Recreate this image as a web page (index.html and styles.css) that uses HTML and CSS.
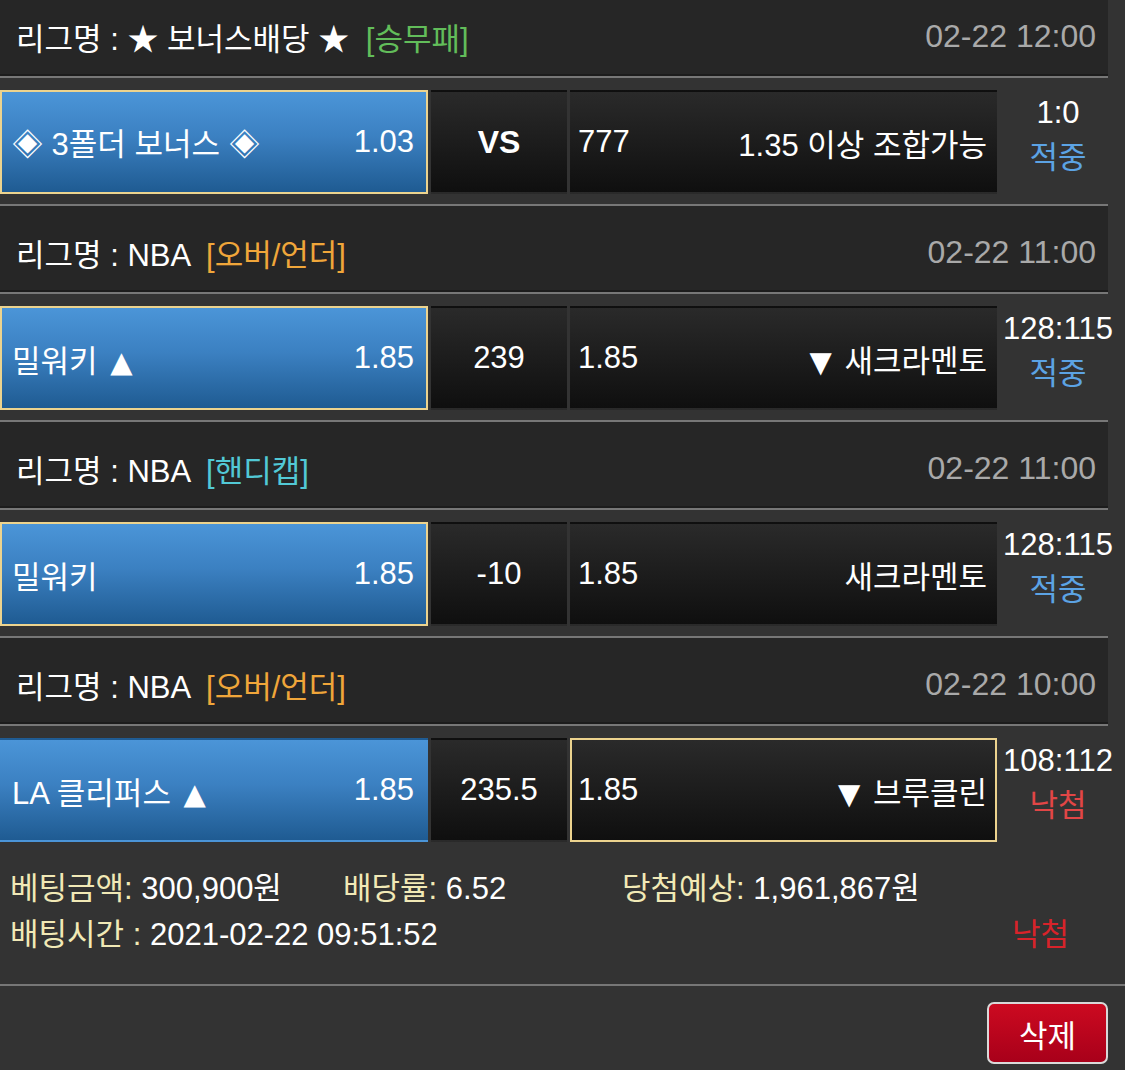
FILE: index.html
```html
<!doctype html>
<html lang="ko">
<head>
  <meta charset="utf-8" />
  <meta name="viewport" content="width=device-width, initial-scale=1" />
  <title>배팅내역</title>
  <link rel="stylesheet" href="styles.css">
</head>

<body>
  <main class="slip">
    <section class="game">
      <div class="league">
        <p class="leagueName">리그명 : ★ 보너스배당 ★ <span class="tag tagWin">[승무패]</span></p>
        <p class="date">02-22 12:00</p>
      </div>
      <div class="betRow">
        <div class="pick home picked"><span>◈ 3폴더 보너스 ◈</span><span>1.03</span></div>
        <div class="pick mid"><b>VS</b></div>
        <div class="pick away"><span>777</span><span>1.35 이상 조합가능</span></div>
        <div class="result"><span class="score">1:0</span><span class="hit">적중</span></div>
      </div>
    </section>

    <section class="game">
      <div class="league">
        <p class="leagueName">리그명 : NBA <span class="tag tagOU">[오버/언더]</span></p>
        <p class="date">02-22 11:00</p>
      </div>
      <div class="betRow">
        <div class="pick home picked"><span>밀워키 <span class="arr">▲</span></span><span>1.85</span></div>
        <div class="pick mid">239</div>
        <div class="pick away"><span>1.85</span><span><span class="arr">▼</span> 새크라멘토</span></div>
        <div class="result"><span class="score">128:115</span><span class="hit">적중</span></div>
      </div>
    </section>

    <section class="game">
      <div class="league">
        <p class="leagueName">리그명 : NBA <span class="tag tagHandi">[핸디캡]</span></p>
        <p class="date">02-22 11:00</p>
      </div>
      <div class="betRow">
        <div class="pick home picked"><span>밀워키</span><span>1.85</span></div>
        <div class="pick mid">-10</div>
        <div class="pick away"><span>1.85</span><span>새크라멘토</span></div>
        <div class="result"><span class="score">128:115</span><span class="hit">적중</span></div>
      </div>
    </section>

    <section class="game">
      <div class="league">
        <p class="leagueName">리그명 : NBA <span class="tag tagOU">[오버/언더]</span></p>
        <p class="date">02-22 10:00</p>
      </div>
      <div class="betRow last">
        <div class="pick home"><span>LA 클리퍼스 <span class="arr">▲</span></span><span>1.85</span></div>
        <div class="pick mid">235.5</div>
        <div class="pick away picked"><span>1.85</span><span><span class="arr">▼</span> 브루클린</span></div>
        <div class="result"><span class="score">108:112</span><span class="miss">낙첨</span></div>
      </div>
    </section>

    <section class="summary">
      <div class="sumLine">
        <p class="sumItem amount"><span class="k">베팅금액:</span> 300,900원</p>
        <p class="sumItem rate"><span class="k">배당률:</span> 6.52</p>
        <p class="sumItem expect"><span class="k">당첨예상:</span> 1,961,867원</p>
      </div>
      <div class="sumLine">
        <p class="sumItem"><span class="k">배팅시간 :</span> 2021-02-22 09:51:52</p>
        <p class="sumState">낙첨</p>
      </div>
    </section>

    <div class="actions">
      <button class="delBtn" type="button">삭제</button>
    </div>
  </main>
</body>
</html>
```

FILE: styles.css
```css
:root{
  --bg:#333333;
  --head:#262626;
  --line:#777777;
  --text:#ffffff;
  --muted:#a9a9a9;
  --gold:#ecd38e;
  --cream:#f1e9b6;
}

*{ box-sizing:border-box; }
body{
  margin:0;
  background:var(--bg);
  color:var(--text);
  font-family:"Liberation Sans", Arial, "Noto Sans CJK KR", sans-serif;
  overflow:hidden;
}
p{ margin:0; }

.slip{ margin-top:-10px; }

/* league header */
.league{
  width:1108px;
  height:88px;
  background:var(--head);
  display:flex;
  justify-content:space-between;
  align-items:center;
  padding:6px 12px 0 16px;
  border-bottom:2px solid var(--line);
  box-shadow:0 -2px 0 #1c1c1c inset;
}
.leagueName{ font-size:31px; }
.tag{ margin-left:8px; }
.tagWin{ color:#62bd5a; }
.tagOU{ color:#f0a63a; }
.tagHandi{ color:#52c9d6; }
.date{ font-size:32px; color:var(--muted); }

/* bet row */
.betRow{
  display:grid;
  grid-template-columns:428px 136px 427px 1fr;
  column-gap:3px;
  padding:12px 0 10px 0;
  border-bottom:2px solid var(--line);
  width:1108px;
}
.betRow .pick{ height:104px; }

.pick{
  display:flex;
  justify-content:space-between;
  align-items:center;
  font-size:31px;
  border:2px solid transparent;
  padding:0 12px 0 10px;
  background:linear-gradient(180deg, #2a2a2a, #0f0f0f);
}
.home{
  background:linear-gradient(180deg, #4b95d8 0%, #3b80c1 45%, #1f5b92 100%);
}
.mid{
  justify-content:center;
  padding:0;
}
.mid b{ font-size:32px; font-weight:700; }
.away{ padding:0 8px 0 6px; }
.picked{ border-color:var(--gold); }

.arr{
  font-family:"DejaVu Sans", sans-serif;
  font-size:29px;
  padding:0 4px;
}

.result{
  height:104px;
  display:flex;
  flex-direction:column;
  align-items:center;
  justify-content:center;
  padding-bottom:14px;
  font-size:31px;
  line-height:45px;
  white-space:nowrap;
  margin-right:-8px;
}
.hit{ color:#5ca3e4; }
.miss{ color:#e24646; }

.betRow.last{ border-bottom:none; padding-bottom:0; }

/* summary */
.summary{
  padding:20px 10px 30px 10px;
  border-bottom:2px solid var(--line);
  font-size:31px;
}
.sumLine{
  display:flex;
  align-items:center;
  height:46px;
}
.k{ color:var(--cream); }
.amount{ width:333px; }
.rate{ width:279px; }
.sumState{
  margin-left:auto;
  margin-right:46px;
  color:#d8232a;
}

.actions{
  display:flex;
  justify-content:flex-end;
  padding:16px 17px 0 0;
}
.delBtn{
  width:121px;
  height:62px;
  border:2px solid #d9d9d9;
  border-radius:7px;
  background:linear-gradient(180deg, #cc0a20, #a8001a);
  color:#fff;
  font-family:inherit;
  font-size:31px;
  cursor:pointer;
}
```
